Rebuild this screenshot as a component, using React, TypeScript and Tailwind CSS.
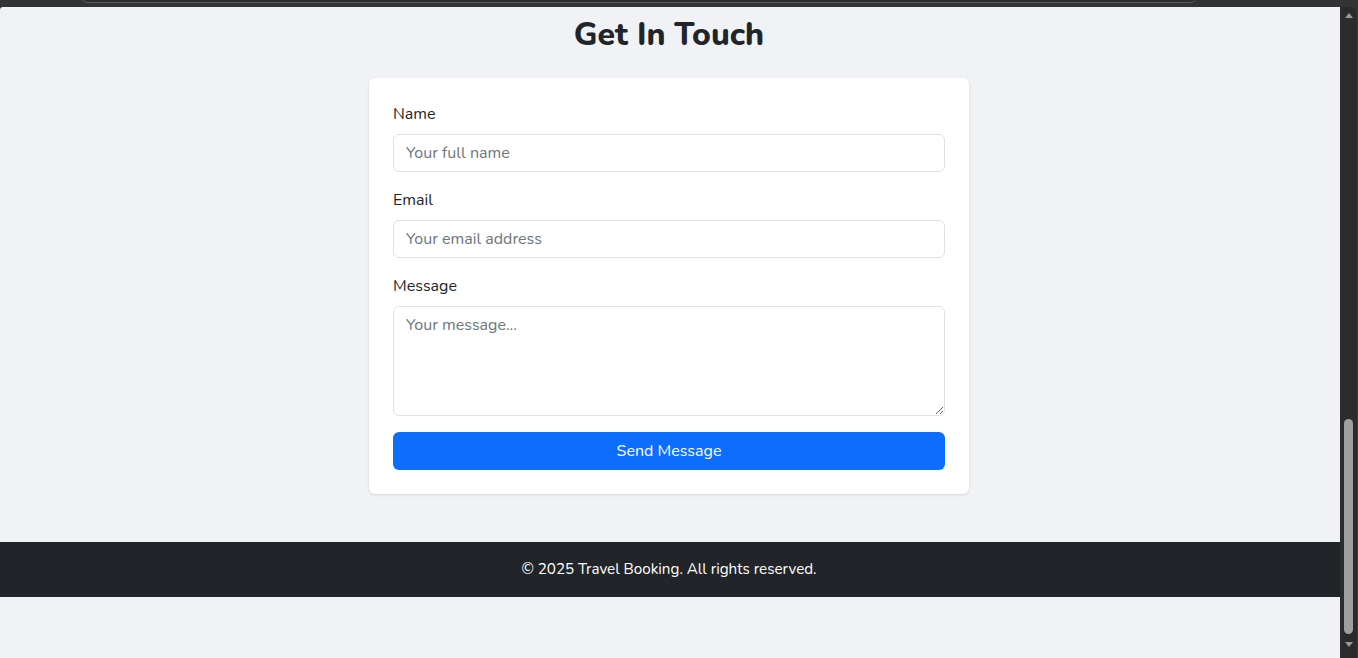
const font = { fontFamily: '"Nunito", "Lato", "Noto Sans", sans-serif' }

function Field({ label, placeholder }: { label: string; placeholder: string }) {
  return (
    <div className="mb-4">
      <label className="block mb-2 text-base leading-6 text-[#212529]">{label}</label>
      <input
        placeholder={placeholder}
        className="block w-full h-[38px] px-3 rounded-md border border-[#dee2e6] bg-white text-base text-[#212529] placeholder:text-[#6c757d] outline-none"
      />
    </div>
  )
}

export default function App() {
  return (
    <div className="h-[658px] w-[1358px] flex flex-col bg-[#333333] overflow-hidden" style={font}>
      {/* browser chrome strip */}
      <div className="h-[7px] relative shrink-0">
        <div className="absolute left-[80px] right-[160px] -top-[10px] h-[13px] rounded-b-lg border border-[#5a5a5a] bg-[#2e2e2e]" />
      </div>
      <div className="flex flex-1 min-h-0">
        <div className="flex-1 flex flex-col bg-[#f0f2f5] rounded-tl-[3px]">
          <main className="pt-[9px] pb-12 pr-[2px]">
            <h2 className="text-[32px] leading-[38px] font-extrabold text-center text-[#212529] mb-6">Get In Touch</h2>
            <div className="w-[600px] mx-auto bg-white rounded-md shadow-sm p-6">
              <Field label="Name" placeholder="Your full name" />
              <Field label="Email" placeholder="Your email address" />
              <div className="mb-4">
                <label className="block mb-2 text-base leading-6 text-[#212529]">Message</label>
                <textarea
                  placeholder="Your message..."
                  className="block w-full h-[110px] px-3 py-1.5 rounded-md border border-[#dee2e6] bg-white text-base text-[#212529] placeholder:text-[#6c757d] outline-none resize-y"
                />
              </div>
              <button className="w-full h-[38px] rounded-md bg-[#0d6efd] text-white text-base">Send Message</button>
            </div>
          </main>
          <footer className="h-[55px] pr-[2px] bg-[#212529] flex items-center justify-center text-white text-[15.2px]">
            © 2025 Travel Booking. All rights reserved.
          </footer>
        </div>
        {/* scrollbar */}
        <div className="w-[18px] shrink-0 bg-[#2b2b2b] border-r border-[#3a3a3a] flex flex-col items-center pt-[6px] pb-[11px] rounded-tr-md">
          <svg width="8" height="5" viewBox="0 0 8 5"><path d="M4 0L8 5H0Z" fill="#9a9a9a" /></svg>
          <div className="flex-1" />
          <div className="h-[215px] w-[9px] rounded-full bg-[#9f9f9f]" />
          <div className="h-[8px]" />
          <svg width="8" height="5" viewBox="0 0 8 5"><path d="M0 0H8L4 5Z" fill="#9a9a9a" /></svg>
        </div>
      </div>
    </div>
  )
}
